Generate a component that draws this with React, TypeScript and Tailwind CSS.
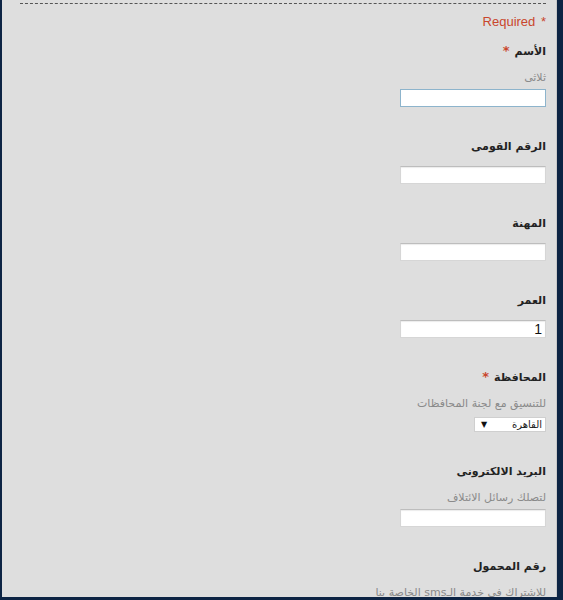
import React from "react";

type Field = {
    label: string;
    required?: boolean;
    desc?: string;
    kind: "input" | "select" | "none";
    value?: string;
    focus?: boolean;
};

const fields: Field[] = [
    { label: "الأسم", required: true, desc: "ثلاثى", kind: "input", focus: true },
    { label: "الرقم القومى", kind: "input" },
    { label: "المهنة", kind: "input" },
    { label: "العمر", kind: "input", value: "1" },
    { label: "المحافظة", required: true, desc: "للتنسيق مع لجنة المحافظات", kind: "select", value: "القاهرة" },
    { label: "البريد الالكترونى", desc: "لتصلك رسائل الائتلاف", kind: "input" },
    { label: "رقم المحمول", desc: "للاشتراك فى خدمة الـsms الخاصة بنا", kind: "none" },
];

function FieldBlock({ f, first }: { f: Field; first: boolean }) {
    return (
        <div className={first ? "mt-[14px]" : "mt-[32px]"}>
            <div className="h-[16px] text-[11px] leading-[16px] font-bold text-[#222] whitespace-nowrap">
                {f.label}
                {f.required && <span className="text-[#c9462c] mr-[5px] text-[13px] leading-[0]">*</span>}
            </div>
            {f.desc && (
                <div className="mt-[10px] h-[16px] text-[11px] leading-[16px] text-[#8a8a8a] whitespace-nowrap">{f.desc}</div>
            )}
            {f.kind === "input" && (
                <div
                    className={
                        (f.desc ? "mt-[3px] " : "mt-[11px] ") +
                        "w-[146px] h-[18px] bg-white border text-[14px] leading-[16px] pr-[3px] text-[#111] " +
                        (f.focus
                            ? "border-[#8db4cc]"
                            : "border-[#d6d6d6] border-t-[#bdbdbd] shadow-[inset_0_1px_1px_rgba(0,0,0,0.08)]")
                    }
                    style={{ fontFamily: '"Liberation Sans", Arial, sans-serif' }}
                >
                    {f.value}
                </div>
            )}
            {f.kind === "select" && (
                <div className="mt-[5px] w-[72px] h-[15px] bg-white border border-[#cfcfcf] flex items-center justify-between pr-[3px] pl-[6px]">
                    <span className="text-[10px] leading-[13px] text-[#222]">{f.value}</span>
                    <span className="text-[8px] leading-none text-[#111]">▼</span>
                </div>
            )}
        </div>
    );
}

export default function App() {
    return (
        <div className="w-[563px] h-[600px] bg-[#0d2444] overflow-hidden" style={{ fontFamily: '"DejaVu Sans", "Liberation Sans", sans-serif' }}>
            <div className="ml-[2px] w-[555px] h-[597px] bg-[#dedede] border-r border-[#c9c9c9] pl-[18px] pr-[10px] overflow-hidden">
                <div className="mt-[3px] border-t border-dashed border-[#555]" />
                <div className="mt-[10px] h-[16px] text-right text-[13px] leading-[16px] text-[#c9462c]" style={{ fontFamily: '"Liberation Sans", Arial, sans-serif' }}>
                    Required <span className="ml-[2px]">*</span>
                </div>
                <div dir="rtl" className="text-right">
                    {fields.map((f, i) => (
                        <FieldBlock key={f.label} f={f} first={i === 0} />
                    ))}
                </div>
            </div>
        </div>
    );
}
